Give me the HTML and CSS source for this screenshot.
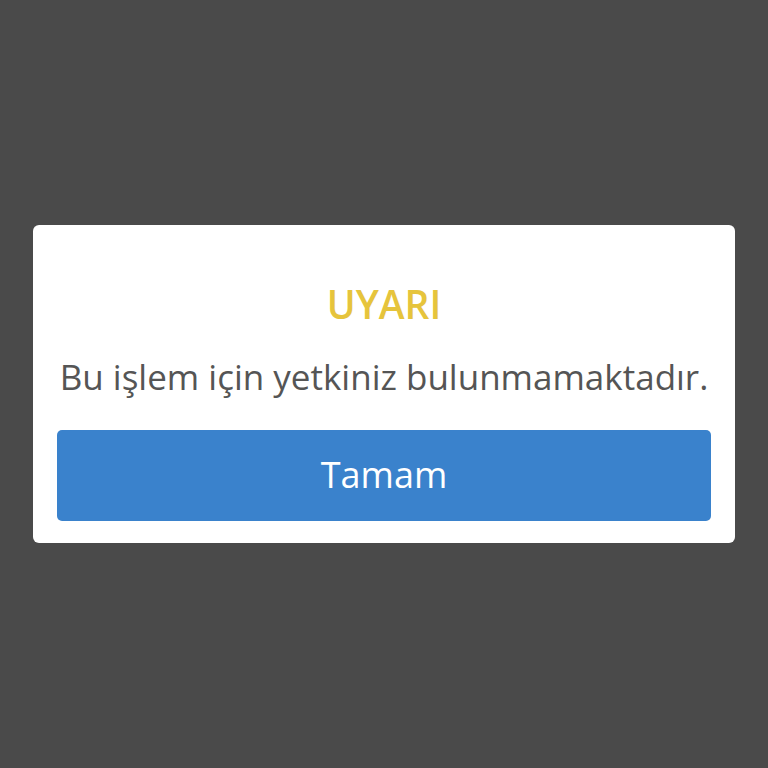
FILE: index.html
```html
<!DOCTYPE html>
<html lang="tr">
<head>
<meta charset="utf-8">
<link rel="stylesheet" href="styles.css">
</head>
<body>
<div class="overlay">
  <div class="dialog">
    <h1 class="title">UYARI</h1>
    <p class="message">Bu işlem için yetkiniz bulunmamaktadır.</p>
    <button class="btn">Tamam</button>
  </div>
</div>
</body>
</html>
```
FILE: styles.css
```css
html, body {
  margin: 0;
  padding: 0;
  background: #4a4a4a;
  font-family: "Open Sans", "Noto Sans", sans-serif;
}
.overlay {
  width: 768px;
  height: 768px;
  display: flex;
  align-items: center;
  justify-content: center;
}
.dialog {
  width: 702px;
  box-sizing: border-box;
  background: #fff;
  border-radius: 6px;
  padding: 57px 24px 22px;
  display: flex;
  flex-direction: column;
  align-items: stretch;
}
.title {
  margin: 0;
  text-align: center;
  font-size: 39px;
  line-height: 44px;
  font-weight: 600;
  color: #e6c43c;
}
.message {
  margin: 31px 0 0;
  text-align: center;
  font-size: 35px;
  line-height: 40px;
  color: #555555;
  white-space: nowrap;
}
.btn {
  margin-top: 33px;
  height: 91px;
  border: none;
  border-radius: 5px;
  background: #3a82cc;
  color: #fff;
  font-family: inherit;
  font-size: 36px;
  padding: 0 0 2px;
  display: flex;
  align-items: center;
  justify-content: center;
}
```
